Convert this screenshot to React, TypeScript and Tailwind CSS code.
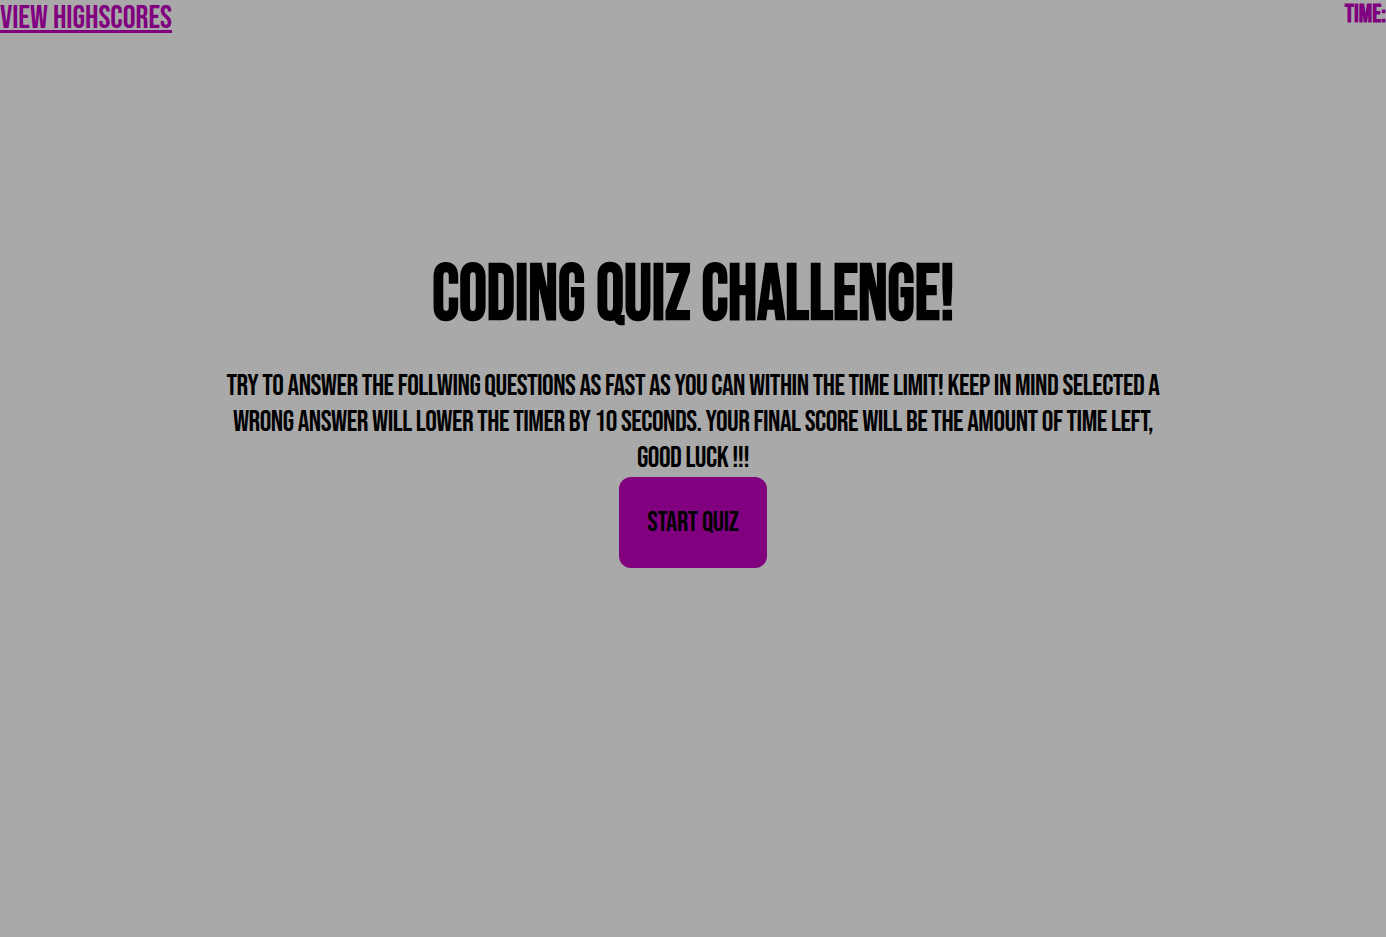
import React from "react";

const font = {
  fontFamily: '"Bebas Neue", "Liberation Sans Narrow", "DejaVu Sans Condensed", "Liberation Sans", sans-serif',
};

export default function App() {
  return (
    <div className="min-h-screen bg-[#a9a9a9] text-black uppercase font-normal" style={font}>
      <header className="flex justify-between items-start">
        <a href="#" className="text-[32px] leading-[38px] text-[#800080] underline">
          View Highscores
        </a>
        <div className="text-[25px] leading-[30px] text-[#800080] font-bold">Time:</div>
      </header>

      <main className="flex flex-col items-center pt-[216px]">
        <h1 className="text-[78px] leading-[84px] font-bold whitespace-nowrap scale-x-[0.89]">
          Coding Quiz Challenge!
        </h1>
        <p className="mt-[31px] w-[960px] text-center text-[29px] leading-[36px] tracking-[-0.5px]">
          Try to answer the follwing questions as fast as you can within the time limit! Keep in mind selected a
          wrong answer will lower the timer by 10 seconds. Your final score will be the amount of time left, good
          luck !!!
        </p>
        <button className="w-[148px] h-[91px] rounded-xl bg-[#800080] text-[28px] tracking-[-0.3px]">
          Start Quiz
        </button>
      </main>
    </div>
  );
}
